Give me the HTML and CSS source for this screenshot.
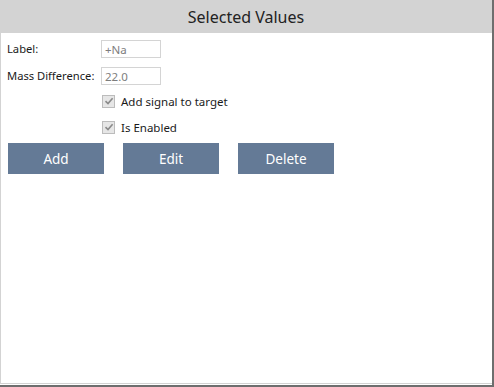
FILE: index.html
```html
<!DOCTYPE html>
<html lang="en">
<head>
    <meta charset="UTF-8">
    <title>Selected Values</title>
    <link rel="stylesheet" href="styles.css">
</head>
<body>
    <div class="window">
        <div class="header">Selected Values</div>

        <div class="panel">
            <div class="form">
                <label class="field-label">Label:</label>
                <input class="field-input" type="text" value="+Na" disabled>

                <label class="field-label">Mass Difference:</label>
                <input class="field-input" type="text" value="22.0" disabled>
            </div>

            <div class="checks">
                <div class="check-row">
                    <span class="checkbox">
                        <svg width="10" height="10" viewBox="0 0 10 10">
                            <path d="M1.5 5.2 L4 7.6 L8.6 2.2" fill="none" stroke="#8a8a8a" stroke-width="1.6"/>
                        </svg>
                    </span>
                    <span class="check-text">Add signal to target</span>
                </div>
                <div class="check-row">
                    <span class="checkbox">
                        <svg width="10" height="10" viewBox="0 0 10 10">
                            <path d="M1.5 5.2 L4 7.6 L8.6 2.2" fill="none" stroke="#8a8a8a" stroke-width="1.6"/>
                        </svg>
                    </span>
                    <span class="check-text">Is Enabled</span>
                </div>
            </div>

            <div class="buttons">
                <button class="btn">Add</button>
                <button class="btn">Edit</button>
                <button class="btn">Delete</button>
            </div>
        </div>
    </div>
</body>
</html>
```

FILE: styles.css
```css
* {
    margin: 0;
    padding: 0;
    box-sizing: border-box;
}

body {
    font-family: 'Noto Sans', 'Open Sans', sans-serif;
    background: white;
    color: #1a1a1a;
}

.window {
    width: 494px;
    height: 387px;
    display: flex;
    flex-direction: column;
    border-right: 2px solid #6e6e6e;
    border-bottom: 2px solid #6e6e6e;
}

.header {
    height: 33px;
    background: #d3d3d3;
    display: flex;
    align-items: center;
    justify-content: center;
    font-size: 16px;
    color: #222;
    padding-top: 1px;
}

.panel {
    flex: 1;
    border-left: 1px solid #d3d3d3;
    border-bottom: 1px solid #d3d3d3;
    margin-bottom: 1px;
    padding: 7px 0 0 6px;
}

.form {
    display: grid;
    grid-template-columns: 94px 60px;
    row-gap: 9px;
    align-items: center;
}

.field-label {
    font-size: 11.2px;
    line-height: 18px;
    white-space: nowrap;
}

.field-input {
    width: 60px;
    height: 18px;
    border: 1px solid #d4d4d4;
    background: white;
    font-family: inherit;
    font-size: 11.5px;
    color: #7d7d7d;
    padding: 0 3px;
    outline: none;
}

.checks {
    margin: 8px 0 0 95px;
    display: flex;
    flex-direction: column;
    gap: 10px;
}

.check-row {
    display: flex;
    align-items: center;
    gap: 6px;
    height: 16px;
}

.checkbox {
    width: 13px;
    height: 13px;
    border: 1px solid #bcbcbc;
    background: #e6e6e6;
    display: flex;
    align-items: center;
    justify-content: center;
}

.check-text {
    font-size: 11.5px;
}

.buttons {
    display: flex;
    gap: 19px;
    margin: 8px 0 0 1px;
}

.btn {
    width: 96px;
    height: 31px;
    border: none;
    background: #647a96;
    color: white;
    font-family: inherit;
    font-size: 13.5px;
}
```
